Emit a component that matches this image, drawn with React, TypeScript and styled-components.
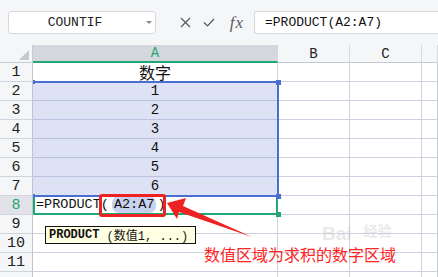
import React from 'react';
import styled, { createGlobalStyle } from 'styled-components';

const GlobalStyle = createGlobalStyle`
  html, body {
    margin: 0;
    padding: 0;
    background: #ffffff;
    overflow: hidden;
  }
`;

const MONO = `'Liberation Mono', 'Noto Sans CJK SC', monospace`;
const CJK = `'Noto Sans CJK SC', 'Liberation Sans', sans-serif`;

const Page = styled.div`
  position: relative;
  width: 438px;
  height: 277px;
  overflow: hidden;
  background: #ffffff;
  font-family: ${MONO};
  color: #111;
`;

const Toolbar = styled.div`
  display: flex;
  align-items: center;
  height: 45px;
  padding-left: 8px;
  background: #f5f6f8;
  box-sizing: border-box;
`;

const NameBox = styled.div`
  position: relative;
  display: flex;
  align-items: center;
  justify-content: center;
  width: 148px;
  height: 23px;
  box-sizing: border-box;
  padding-right: 14px;
  border: 1px solid #d6d8dd;
  border-radius: 3px;
  background: #ffffff;
  font-size: 13px;
  color: #222;
`;

const DropCaret = styled.span`
  position: absolute;
  right: 3px;
  top: 9px;
  width: 0;
  height: 0;
  border-left: 3px solid transparent;
  border-right: 3px solid transparent;
  border-top: 3px solid #8a8d93;
`;

const Spacer = styled.div<{ $w: number }>`
  width: ${(p) => p.$w}px;
`;

const IconSlot = styled.div<{ $w: number }>`
  display: flex;
  align-items: center;
  justify-content: center;
  width: ${(p) => p.$w}px;
  height: 23px;
  color: #55585e;
`;

const Fx = styled.span`
  font-family: 'Liberation Serif', 'DejaVu Serif', serif;
  font-style: italic;
  font-size: 17px;
  color: #5a5d63;
  letter-spacing: 1px;
`;

const FormulaBox = styled.div`
  flex: 1;
  display: flex;
  align-items: center;
  height: 23px;
  box-sizing: border-box;
  padding-left: 10px;
  border: 1px solid #d6d8dd;
  border-right: none;
  border-radius: 3px 0 0 3px;
  background: #ffffff;
  font-size: 13px;
  color: #111;
`;

const Sheet = styled.div`
  display: grid;
  grid-template-columns: 33px 245px 72px 72px 1fr;
  grid-template-rows: 18px;
  grid-auto-rows: 19px;
`;

const Corner = styled.div`
  display: flex;
  align-items: flex-end;
  justify-content: flex-end;
  padding: 0 3px 2px 0;
  background: #f5f6f8;
  border-right: 1px solid #c9ccd3;
  border-bottom: 1px solid #c9ccd3;
  box-sizing: border-box;
`;

const ColHead = styled.div<{ $active?: boolean }>`
  display: flex;
  align-items: center;
  justify-content: center;
  box-sizing: border-box;
  font-size: 14px;
  background: ${(p) => (p.$active ? '#d4d7de' : '#f5f6f8')};
  color: ${(p) => (p.$active ? '#1fa874' : '#222')};
  border-right: 1px solid #d6d9df;
  border-bottom: ${(p) => (p.$active ? '2px solid #1fa874' : '1px solid #c4c8d0')};
`;

const RowHead = styled.div<{ $active?: boolean }>`
  display: flex;
  align-items: center;
  justify-content: center;
  box-sizing: border-box;
  font-size: 15px;
  background: ${(p) => (p.$active ? '#e1e3e8' : '#f5f6f8')};
  color: ${(p) => (p.$active ? '#1fa874' : '#222')};
  border-right: 1px solid #bfc3cb;
  border-bottom: 1px solid #d0d4dc;
`;

const Cell = styled.div<{ $selected?: boolean; $big?: boolean }>`
  display: flex;
  align-items: center;
  justify-content: center;
  box-sizing: border-box;
  font-size: ${(p) => (p.$big ? '16px' : '14px')};
  font-family: ${(p) => (p.$big ? CJK : MONO)};
  background: ${(p) => (p.$selected ? '#dde3f5' : '#ffffff')};
  border-right: 1px solid ${(p) => (p.$selected ? '#bcc5e0' : '#cbd1df')};
  border-bottom: 1px solid ${(p) => (p.$selected ? '#b9c2de' : '#cbd1df')};
  color: #111;
`;

const EditCell = styled.div`
  position: relative;
  display: flex;
  align-items: center;
  box-sizing: border-box;
  padding-left: 1px;
  background: #ffffff;
  border-left: 2px solid #1fa874;
  border-right: 2px solid #1fa874;
  border-bottom: 2px solid #1fa874;
  font-size: 13.5px;
  white-space: pre;
`;

const RefChip = styled.span`
  background: #c7d2ef;
  border-radius: 7px;
  padding: 1px 2px;
  margin: 0 1px 0 3px;
`;

const Handle = styled.span<{ $color: string; $top: number }>`
  position: absolute;
  left: 276px;
  top: ${(p) => p.$top}px;
  width: 5px;
  height: 5px;
  background: ${(p) => p.$color};
  z-index: 3;
`;

const Selection = styled.div`
  position: absolute;
  left: 33px;
  top: 81px;
  width: 246px;
  height: 116px;
  box-sizing: border-box;
  border: 2px solid #4a6fd0;
  border-left: none;
  pointer-events: none;
  z-index: 2;
`;

const SelectionTick = styled.span<{ $top: number }>`
  position: absolute;
  left: 33px;
  top: ${(p) => p.$top}px;
  width: 2px;
  height: 4px;
  background: #4a6fd0;
  z-index: 2;
`;

const Tip = styled.div`
  position: absolute;
  left: 45px;
  top: 226px;
  width: 151px;
  height: 18px;
  box-sizing: border-box;
  display: flex;
  align-items: center;
  padding-left: 3px;
  background: #ffffe1;
  border: 1px solid #111;
  font-size: 12px;
  white-space: pre;
  z-index: 4;

  b {
    font-weight: 700;
  }
`;

const Callout = styled.div`
  position: absolute;
  left: 99px;
  top: 194px;
  width: 67px;
  height: 23px;
  box-sizing: border-box;
  border: 3px solid #ee2222;
  border-radius: 3px;
  z-index: 5;
`;

const Arrow = styled.svg`
  position: absolute;
  left: 160px;
  top: 190px;
  z-index: 5;
`;

const Note = styled.div`
  position: absolute;
  left: 204px;
  top: 244px;
  font-family: ${CJK};
  font-size: 16px;
  line-height: 20px;
  color: #ff2424;
  white-space: nowrap;
  z-index: 5;
`;

const Watermark = styled.div`
  position: absolute;
  left: 322px;
  top: 224px;
  display: flex;
  align-items: flex-start;
  font-family: 'Liberation Sans', ${CJK};
  font-size: 19px;
  line-height: 19px;
  font-weight: 700;
  color: rgba(205, 205, 205, 0.45);
  white-space: nowrap;
  z-index: 4;

  span {
    font-size: 14px;
    line-height: 15px;
    margin-left: 12px;
  }
`;

const rows = ['数字', '1', '2', '3', '4', '5', '6'];

const App: React.FC = () => {
  return (
    <Page>
      <GlobalStyle />
      <Toolbar>
        <NameBox>
          COUNTIF
          <DropCaret />
        </NameBox>
        <Spacer $w={18} />
        <IconSlot $w={23}>
          <svg width="11" height="11" viewBox="0 0 11 11">
            <path d="M1 1 L10 10 M10 1 L1 10" stroke="#55585e" strokeWidth="1.2" fill="none" />
          </svg>
        </IconSlot>
        <IconSlot $w={23}>
          <svg width="12" height="9" viewBox="0 0 12 9">
            <path d="M1 4.5 L4.5 8 L11 1" stroke="#55585e" strokeWidth="1.2" fill="none" />
          </svg>
        </IconSlot>
        <IconSlot $w={34}>
          <Fx>fx</Fx>
        </IconSlot>
        <FormulaBox>=PRODUCT(A2:A7)</FormulaBox>
      </Toolbar>

      <Sheet>
        <Corner>
          <svg width="10" height="10" viewBox="0 0 10 10">
            <polygon points="10,0 10,10 0,10" fill="#c5c8ce" />
          </svg>
        </Corner>
        <ColHead $active>A</ColHead>
        <ColHead>B</ColHead>
        <ColHead>C</ColHead>
        <ColHead />

        {rows.map((v, i) => (
          <React.Fragment key={i}>
            <RowHead>{i + 1}</RowHead>
            <Cell $selected={i > 0} $big={i === 0}>{v}</Cell>
            <Cell />
            <Cell />
            <Cell />
          </React.Fragment>
        ))}

        <RowHead $active>8</RowHead>
        <EditCell>
          =PRODUCT(<RefChip>A2:A7</RefChip>)
        </EditCell>
        <Cell />
        <Cell />
        <Cell />

        {[9, 10, 11, 0].map((n) => (
          <React.Fragment key={n}>
            <RowHead>{n > 0 ? n : ''}</RowHead>
            <Cell />
            <Cell />
            <Cell />
            <Cell />
          </React.Fragment>
        ))}
      </Sheet>

      <Selection />
      <SelectionTick $top={80} />
      <SelectionTick $top={194} />
      <Handle $color="#4a6fd0" $top={80} />
      <Handle $color="#4a6fd0" $top={194} />
      <Handle $color="#1fa874" $top={212} />

      <Tip>
        <b>PRODUCT</b> (数值1, ...)
      </Tip>

      <Watermark>
        Bai<span>经验</span>
      </Watermark>

      <Callout />
      <Arrow width="100" height="55" viewBox="0 0 100 55">
        <polygon points="7,13 26,8 23,16 92,47 19,22 17,29" fill="#ee2222" />
      </Arrow>

      <Note>数值区域为求积的数字区域</Note>
    </Page>
  );
};

export default App;
